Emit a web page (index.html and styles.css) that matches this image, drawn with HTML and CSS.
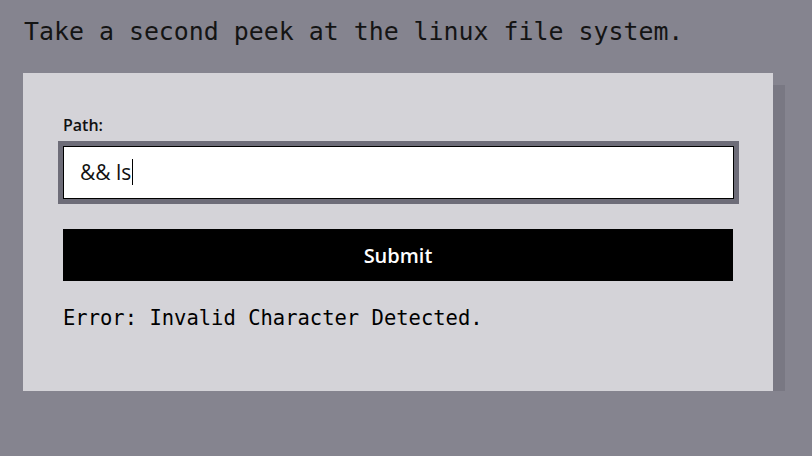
FILE: index.html
```html
<!DOCTYPE html>
<html lang="en">
<head>
<meta charset="utf-8">
<title>Linux file system</title>
<link rel="stylesheet" href="styles.css">
</head>
<body>
<main class="page">
  <h1 class="title">Take a second peek at the linux file system.</h1>
  <form class="card" onsubmit="return false">
    <label class="label" for="path">Path:</label>
    <div class="field" id="path" role="textbox" contenteditable="true" spellcheck="false">&amp;&amp; ls<span class="caret"></span></div>
    <button class="submit" type="submit">Submit</button>
    <p class="error">Error: Invalid Character Detected.</p>
  </form>
</main>
</body>
</html>
```
FILE: styles.css
```css
html, body {
  margin: 0;
  padding: 0;
  background: #85848f;
}
.page {
  padding: 17px 0 0 23px;
  width: 750px;
}
.title {
  margin: 0 0 26px 1px;
  font-family: "DejaVu Sans Mono", "Liberation Mono", monospace;
  font-weight: 400;
  font-size: 24.9px;
  line-height: 30px;
  color: #141414;
  white-space: nowrap;
}
.card {
  display: flex;
  flex-direction: column;
  background: #d4d3d8;
  box-shadow: 12px 12px 0 #797883;
  padding: 40px 40px 58px 40px;
  width: 670px;
}
.label {
  font-family: "Open Sans", "Noto Sans", sans-serif;
  font-weight: 600;
  font-size: 16px;
  line-height: 24px;
  color: #111;
  margin-bottom: 9px;
}
.field {
  box-sizing: border-box;
  display: flex;
  align-items: center;
  width: 671px;
  height: 53px;
  margin: 0;
  border: 1px solid #000;
  outline: 5px solid #6d6c78;
  padding: 0 16px 2px 16px;
  background: #fff;
  font-family: "Open Sans", "Noto Sans", sans-serif;
  font-size: 21px;
  color: #111;
  white-space: pre;
  caret-color: transparent;
}
.caret {
  display: inline-block;
  width: 1px;
  height: 26px;
  background: #000;
  margin-left: 1px;
}
.submit {
  margin-top: 30px;
  height: 52px;
  width: 670px;
  border: 0;
  background: #000;
  color: #fff;
  font-family: "Open Sans", "Noto Sans", sans-serif;
  font-weight: 600;
  font-size: 20px;
  cursor: pointer;
}
.error {
  margin: 22px 0 0 0;
  font-family: "DejaVu Sans Mono", "Liberation Mono", monospace;
  font-size: 20.5px;
  line-height: 30px;
  color: #000;
}
```
